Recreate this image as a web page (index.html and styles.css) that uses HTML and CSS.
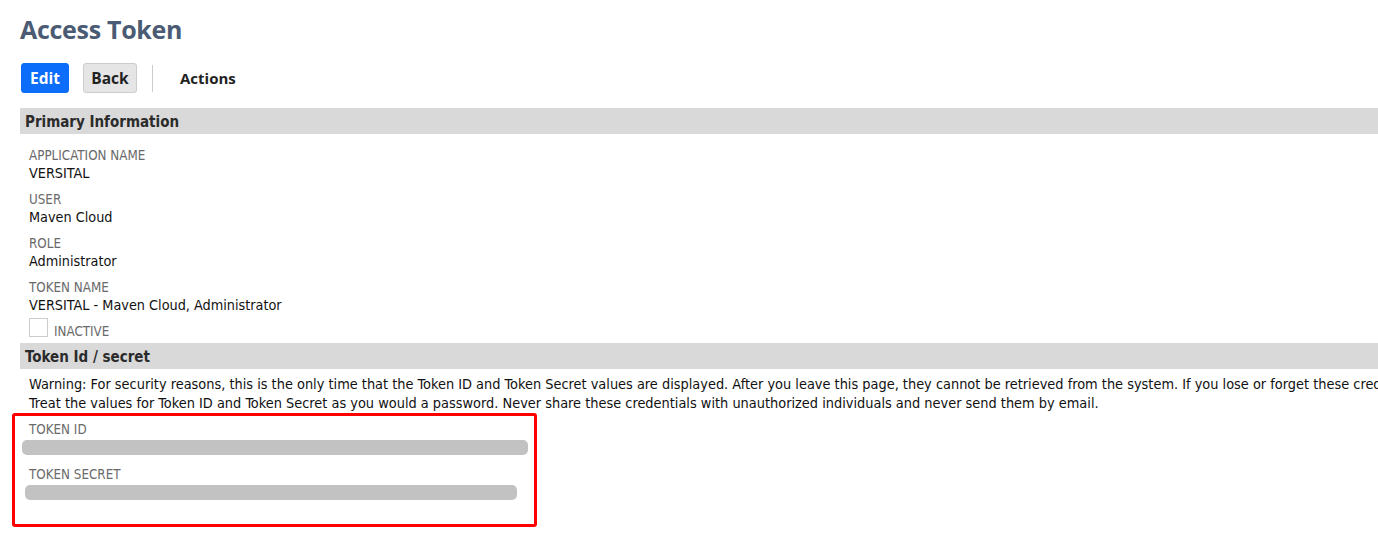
FILE: index.html
```html
<!DOCTYPE html>
<html>
<head>
<meta charset="utf-8">
<link rel="stylesheet" href="styles.css">
</head>
<body>
<div class="page">
  <h1 class="title">Access Token</h1>
  <div class="toolbar">
    <button class="btn btn-primary">Edit</button>
    <button class="btn btn-secondary">Back</button>
    <span class="divider"></span>
    <span class="actions">Actions</span>
  </div>

  <div class="section-bar">Primary Information</div>
  <div class="fields">
    <div class="field">
      <div class="label">APPLICATION NAME</div>
      <div class="value">VERSITAL</div>
    </div>
    <div class="field">
      <div class="label">USER</div>
      <div class="value">Maven Cloud</div>
    </div>
    <div class="field">
      <div class="label">ROLE</div>
      <div class="value">Administrator</div>
    </div>
    <div class="field">
      <div class="label">TOKEN NAME</div>
      <div class="value">VERSITAL - Maven Cloud, Administrator</div>
    </div>
    <div class="check-row">
      <span class="checkbox"></span>
      <span class="label check-label">INACTIVE</span>
    </div>
  </div>

  <div class="section-bar">Token Id / secret</div>
  <p class="warning">Warning: For security reasons, this is the only time that the Token ID and Token Secret values are displayed. After you leave this page, they cannot be retrieved from the system. If you lose or forget these credentials, you will need to reset them to obtain new values.<br>Treat the values for Token ID and Token Secret as you would a password. Never share these credentials with unauthorized individuals and never send them by email.</p>

  <div class="highlight">
    <div class="secret-field">
      <div class="label">TOKEN ID</div>
      <div class="redacted redacted-id"></div>
    </div>
    <div class="secret-field">
      <div class="label">TOKEN SECRET</div>
      <div class="redacted redacted-secret"></div>
    </div>
  </div>
</div>
</body>
</html>
```

FILE: styles.css
```css
html, body {
  margin: 0;
  padding: 0;
  background: #ffffff;
  overflow: hidden;
}

.page {
  width: 1600px;
  padding-left: 20px;
  font-family: "DejaVu Sans", Verdana, sans-serif;
  font-stretch: condensed;
  color: #111111;
}

.title {
  margin: 0;
  padding-top: 11px;
  height: 37px;
  font-family: "Open Sans", Arial, sans-serif;
  font-stretch: normal;
  font-weight: 700;
  font-size: 25px;
  line-height: 37px;
  color: #4a5b73;
  letter-spacing: -0.3px;
}

.toolbar {
  display: flex;
  align-items: center;
  margin-top: 15px;
  height: 30px;
}

.btn {
  height: 30px;
  border-radius: 3px;
  font-family: "Open Sans", Arial, sans-serif;
  font-stretch: normal;
  font-weight: 700;
  font-size: 15.5px;
  padding: 0;
  display: flex;
  align-items: center;
  justify-content: center;
}

.btn-primary {
  margin-left: 1px;
  width: 48px;
  background: #0b6dfa;
  color: #ffffff;
  border: 1px solid #0b6dfa;
}

.btn-secondary {
  margin-left: 14px;
  width: 54px;
  background: #e5e5e5;
  color: #222222;
  border: 1px solid #cccccc;
}

.divider {
  width: 1px;
  height: 27px;
  background: #cccccc;
  margin-left: 15px;
}

.actions {
  margin-left: 27px;
  font-family: "Open Sans", Arial, sans-serif;
  font-stretch: normal;
  font-weight: 700;
  font-size: 15px;
  color: #222222;
}

.section-bar {
  margin-top: 15px;
  height: 26px;
  line-height: 28px;
  background: #d9d9d9;
  padding-left: 5px;
  font-weight: 700;
  font-size: 15px;
  color: #2b2b2b;
}

.fields {
  padding-left: 9px;
  padding-top: 14px;
}

.field {
  margin-bottom: 10px;
}

.label {
  font-size: 13.3px;
  line-height: 16px;
  color: #6a6a6a;
}

.value {
  font-size: 14.3px;
  line-height: 18px;
  color: #111111;
}

.check-row {
  display: flex;
  align-items: flex-start;
  height: 21px;
  margin-top: -6px;
}

.checkbox {
  width: 17px;
  height: 17px;
  border: 1px solid #cccccc;
  background: #ffffff;
}

.check-label {
  margin-left: 6px;
  margin-top: 6px;
  line-height: 16px;
}

.fields + .section-bar {
  margin-top: 4px;
}

.warning {
  margin: 6px 0 0 9px;
  font-size: 14.4px;
  line-height: 19px;
  white-space: nowrap;
  color: #111111;
}

.highlight {
  margin-top: 0;
  margin-left: -8px;
  width: 505px;
  height: 102px;
  border: 3px solid #ff0000;
  border-radius: 3px;
  padding: 6px 0 0 14px;
}

.secret-field {
  margin-bottom: 12px;
}

.redacted {
  height: 15px;
  margin-top: 2px;
  background: #c2c2c2;
  border-radius: 5px;
  filter: blur(0.5px);
}

.redacted-id {
  margin-left: -7px;
  width: 506px;
}

.redacted-secret {
  margin-left: -4px;
  width: 492px;
}
```
